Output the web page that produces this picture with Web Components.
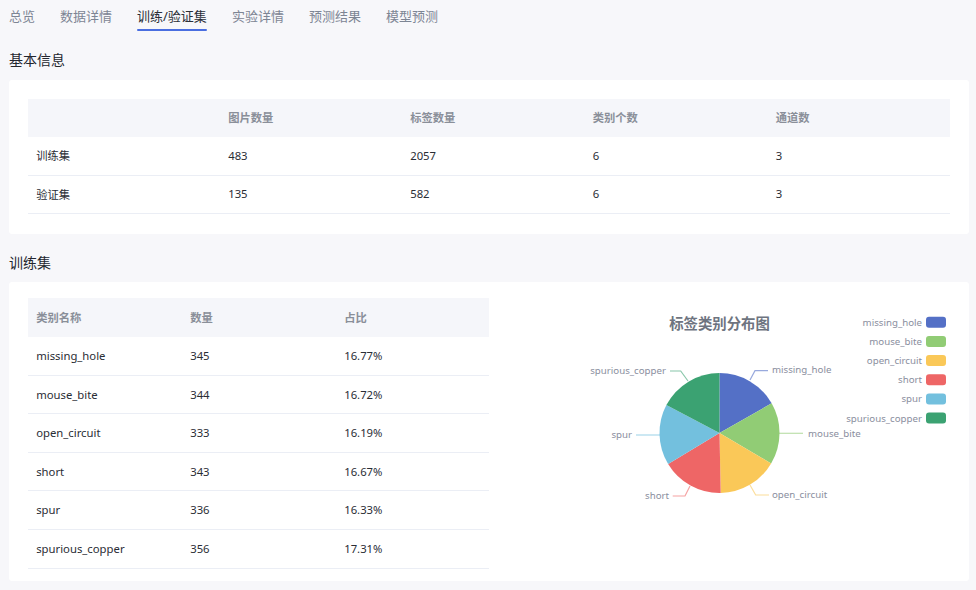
<!DOCTYPE html>
<html lang="zh">
<head>
<meta charset="utf-8">
<title>训练/验证集</title>
<style>
  html, body { margin: 0; background: #f7f7fa; }
  body { font-family: "Noto Sans", "Noto Sans CJK SC", sans-serif; color: #222; height: 590px; overflow: hidden; }
  #page { display: block; padding: 0 7px 0 9px; }
</style>
</head>
<body>
<div id="page">
  <tab-bar active="2" items="总览,数据详情,训练/验证集,实验详情,预测结果,模型预测"></tab-bar>
  <section-title style="--top: 11px; --line: 36px">基本信息</section-title>
  <data-card style="--pad: 19px 19px 20px; --height: 154px">
    <data-table id="basic" columns="192px 182px 182.5px 183px 182.5px"></data-table>
  </data-card>
  <section-title style="--top: 10px; --line: 38px">训练集</section-title>
  <data-card style="--pad: 16px 19px 13px; --height: 299px">
    <div style="display:flex">
      <data-table id="train" columns="154px 154px 153px" style="width:461px; --head: 39px; --row: 38.6px"></data-table>
      <pie-chart id="pie"></pie-chart>
    </div>
  </data-card>
</div>

<script>
class TabBar extends HTMLElement {
  constructor() {
    super();
    this.attachShadow({ mode: "open" });
  }
  connectedCallback() {
    const active = Number(this.getAttribute("active"));
    const items = this.getAttribute("items").split(",");
    this.shadowRoot.innerHTML = `
      <style>
        :host { display: flex; gap: 25px; height: 31px; font-size: 13px; line-height: 18px; color: #7d8594; }
        div { height: 31px; box-sizing: border-box; padding-top: 7px; }
        .on { color: #2b2f38; position: relative; }
        .on::after { content: ""; position: absolute; left: 0; right: 0; bottom: 0; height: 2px; border-radius: 1px; background: #4a6ee0; }
      </style>
      ${items.map((t, i) => `<div class="${i === active ? "on" : ""}">${t}</div>`).join("")}
    `;
  }
}

class SectionTitle extends HTMLElement {
  constructor() {
    super();
    this.attachShadow({ mode: "open" }).innerHTML = `
      <style>
        :host { display: block; margin-top: var(--top, 0); height: 38px; font-size: 14px; line-height: var(--line, 36px); color: #23262e; }
      </style>
      <slot></slot>
    `;
  }
}

class DataCard extends HTMLElement {
  constructor() {
    super();
    this.attachShadow({ mode: "open" }).innerHTML = `
      <style>
        :host { display: block; box-sizing: border-box; background: #fff; border-radius: 3px; padding: var(--pad, 19px); height: var(--height, auto); }
      </style>
      <slot></slot>
    `;
  }
}

class DataTable extends HTMLElement {
  constructor() {
    super();
    this.attachShadow({ mode: "open" });
  }
  set data({ head, rows }) {
    const cols = this.getAttribute("columns");
    const row = (cells, cls) => `<div class="row ${cls}">${cells.map(c => `<span>${c}</span>`).join("")}</div>`;
    this.shadowRoot.innerHTML = `
      <style>
        :host { display: block; font-size: 11.3px; color: #2a2d35; flex: none; }
        .row { display: grid; grid-template-columns: ${cols}; align-items: center; height: var(--row, 38.5px); padding-bottom: .6px; border-bottom: 1px solid #ebeef5; box-sizing: border-box; }
        .row span { padding-left: 8.2px; white-space: nowrap; }
        .head { background: #f5f6fa; color: #8a8f99; font-weight: 700; border-bottom: 0; height: var(--head, 38px); padding-bottom: 2px; }
      </style>
      ${row(head, "head")}
      ${rows.map(r => row(r, "")).join("")}
    `;
  }
}

class PieChart extends HTMLElement {
  constructor() {
    super();
    this.attachShadow({ mode: "open" });
  }
  set data(items) {
    const cx = 719.5, cy = 433, r = 60;
    const total = items.reduce((s, d) => s + d.value, 0);
    let a = 0;
    const point = deg => {
      const rad = deg * Math.PI / 180;
      return `${(cx + r * Math.sin(rad)).toFixed(2)} ${(cy - r * Math.cos(rad)).toFixed(2)}`;
    };
    const slices = items.map(d => {
      const b = a + d.value / total * 360;
      const path = `<path d="M${cx} ${cy}L${point(a)}A${r} ${r} 0 0 1 ${point(b)}Z" fill="${d.color}"/>`;
      a = b;
      return path;
    }).join("");
    const labels = items.map(d => `
      <polyline points="${d.line}" fill="none" stroke="${d.color}" stroke-opacity=".6" stroke-width="1.2"/>
      <text x="${d.x}" y="${d.y}" text-anchor="${d.anchor}">${d.name}</text>`).join("");
    const legend = items.map((d, i) => {
      const y = 322.3 + i * 19.15;
      return `<text x="922" y="${y}" text-anchor="end" dominant-baseline="central">${d.name}</text>
        <rect x="926" y="${y - 5.5}" width="20" height="11" rx="3" fill="${d.color}"/>`;
    }).join("");
    this.shadowRoot.innerHTML = `
      <style>
        :host { display: block; flex: none; width: 480px; height: 299px; margin: -16px -19px 0 0; }
        svg { display: block; }
        text { font-family: "Noto Sans", "Noto Sans CJK SC", sans-serif; font-size: 9.7px; fill: #8a8e9e; }
        .title { font-size: 14.4px; font-weight: 700; fill: #6e7480; }
      </style>
      <svg width="480" height="299" viewBox="489 282 480 299">
        <text class="title" x="719.5" y="328.5" text-anchor="middle">标签类别分布图</text>
        ${slices}
        ${labels}
        ${legend}
      </svg>
    `;
  }
}

customElements.define("tab-bar", TabBar);
customElements.define("section-title", SectionTitle);
customElements.define("data-card", DataCard);
customElements.define("data-table", DataTable);
customElements.define("pie-chart", PieChart);

document.getElementById("basic").data = {
  head: ["", "图片数量", "标签数量", "类别个数", "通道数"],
  rows: [
    ["训练集", "483", "2057", "6", "3"],
    ["验证集", "135", "582", "6", "3"]
  ]
};
document.getElementById("train").data = {
  head: ["类别名称", "数量", "占比"],
  rows: [
    ["missing_hole", "345", "16.77%"],
    ["mouse_bite", "344", "16.72%"],
    ["open_circuit", "333", "16.19%"],
    ["short", "343", "16.67%"],
    ["spur", "336", "16.33%"],
    ["spurious_copper", "356", "17.31%"]
  ]
};
document.getElementById("pie").data = [
  { name: "missing_hole", value: 345, color: "#5470c6", x: 772, y: 372.5, anchor: "start", line: "750,380 755,370.7 768,370.7" },
  { name: "mouse_bite", value: 344, color: "#91cc75", x: 808, y: 436.5, anchor: "start", line: "779,433.3 803,433.3" },
  { name: "open_circuit", value: 333, color: "#fac858", x: 772, y: 498, anchor: "start", line: "750,485 755.7,495 769,495" },
  { name: "short", value: 343, color: "#ee6666", x: 669, y: 498.5, anchor: "end", line: "690,486 685,496 672.7,496" },
  { name: "spur", value: 336, color: "#73c0de", x: 632, y: 438, anchor: "end", line: "660,435 636,435" },
  { name: "spurious_copper", value: 356, color: "#3ba272", x: 666, y: 374, anchor: "end", line: "688,381 680.7,371 670,371" }
];
</script>
</body>
</html>
